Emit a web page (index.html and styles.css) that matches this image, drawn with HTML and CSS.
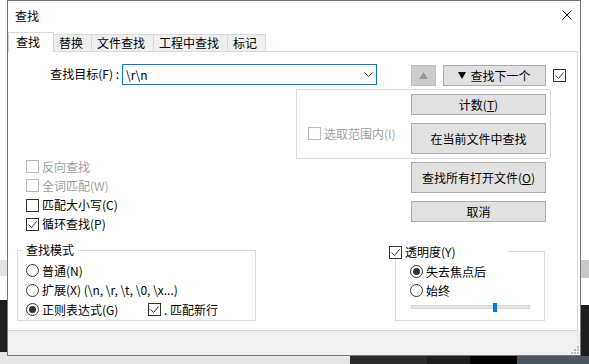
FILE: index.html
```html
<!DOCTYPE html>
<html lang="zh-CN">
<head>
    <meta charset="UTF-8">
    <meta name="viewport" content="width=device-width, initial-scale=1.0">
    <title>查找</title>
    <link rel="stylesheet" href="styles.css">
</head>
<body>
    <div class="dialog">
        <div class="titlebar">
            <span class="title">查找</span>
            <svg class="close" width="10" height="10" viewBox="0 0 10 10"><path d="M0.5 0.5L9.5 9.5M9.5 0.5L0.5 9.5" stroke="#000" stroke-width="1"/></svg>
        </div>

        <div class="tabs">
            <div class="tab active">查找</div>
            <div class="tab">替换</div>
            <div class="tab">文件查找</div>
            <div class="tab">工程中查找</div>
            <div class="tab">标记</div>
        </div>

        <div class="panel">
            <div class="find-row">
                <label class="find-label" for="find-what">查找目标(F) :</label>
                <div class="combo" id="find-what">
                    <span>\r\n</span>
                    <svg width="9" height="5" viewBox="0 0 9 5"><path d="M0.5 0.5L4.5 4.5L8.5 0.5" fill="none" stroke="#444"/></svg>
                </div>
                <button class="btn btn-up" disabled>
                    <svg width="9" height="7" viewBox="0 0 9 7"><path d="M4.5 0L9 7H0Z" fill="#9a9a9a"/></svg>
                </button>
                <button class="btn btn-next">
                    <svg width="8" height="7" viewBox="0 0 8 7"><path d="M0 0H8L4 7Z" fill="#000"/></svg>
                    查找下一个
                </button>
                <span class="check">
                    <svg width="11" height="11" viewBox="0 0 11 11"><path d="M1.5 5.5L4.5 8.5L9.5 2.5" fill="none" stroke="#333"/></svg>
                </span>
            </div>

            <div class="scope-group">
                <div class="opt disabled scope-opt"><span class="check"></span>选取范围内(I)</div>
                <div class="btn-col">
                    <button class="btn">计数(<u>T</u>)</button>
                    <button class="btn btn-tall">在当前文件中查找</button>
                </div>
            </div>

            <div class="mid-row">
                <div class="options">
                    <div class="opt disabled"><span class="check"></span>反向查找</div>
                    <div class="opt disabled"><span class="check"></span>全词匹配(W)</div>
                    <div class="opt"><span class="check"></span>匹配大小写(C)</div>
                    <div class="opt">
                        <span class="check">
                            <svg width="11" height="11" viewBox="0 0 11 11"><path d="M1.5 5.5L4.5 8.5L9.5 2.5" fill="none" stroke="#333"/></svg>
                        </span>循环查找(P)
                    </div>
                </div>
                <div class="btn-col">
                    <button class="btn btn-tall">查找所有打开文件(<u>O</u>)</button>
                    <button class="btn">取消</button>
                </div>
            </div>

            <div class="bottom-row">
                <div class="group mode-group">
                    <div class="group-title">查找模式</div>
                    <div class="opt"><span class="radio"></span>普通(N)</div>
                    <div class="opt"><span class="radio"></span>扩展(X) (\n, \r, \t, \0, \x...)</div>
                    <div class="opt">
                        <span class="radio on"></span>
                        <span class="regex-label">正则表达式(G)</span>
                        <span class="check">
                            <svg width="11" height="11" viewBox="0 0 11 11"><path d="M1.5 5.5L4.5 8.5L9.5 2.5" fill="none" stroke="#333"/></svg>
                        </span>. 匹配新行
                    </div>
                </div>

                <div class="group trans-group">
                    <div class="group-title">
                        <span class="check">
                            <svg width="11" height="11" viewBox="0 0 11 11"><path d="M1.5 5.5L4.5 8.5L9.5 2.5" fill="none" stroke="#333"/></svg>
                        </span>透明度(Y)
                    </div>
                    <div class="opt"><span class="radio on"></span>失去焦点后</div>
                    <div class="opt"><span class="radio"></span>始终</div>
                    <div class="slider"><span class="thumb"></span></div>
                </div>
            </div>
        </div>

        <div class="statusbar">
            <svg width="8" height="8" viewBox="0 0 8 8" fill="#bdbdbd">
                <rect x="6" y="0" width="2" height="2"/>
                <rect x="3" y="3" width="2" height="2"/>
                <rect x="6" y="3" width="2" height="2"/>
                <rect x="0" y="6" width="2" height="2"/>
                <rect x="3" y="6" width="2" height="2"/>
                <rect x="6" y="6" width="2" height="2"/>
            </svg>
        </div>
    </div>
</body>
</html>
```

FILE: styles.css
```css
* {
    box-sizing: border-box;
}

body {
    margin: 0;
    width: 589px;
    height: 364px;
    overflow: hidden;
    font-family: "Noto Sans CJK SC", sans-serif;
    font-size: 12px;
    color: #000;
    /* bits of the editor window behind the dialog */
    background:
        linear-gradient(#1e1e1e, #1e1e1e) 0 300px / 7px 52px no-repeat,
        linear-gradient(#e4e4e4, #e4e4e4) 0 260px / 7px 16px no-repeat,
        linear-gradient(#1e1e1e, #1e1e1e) 581px 305px / 8px 51px no-repeat,
        linear-gradient(#c9c9c9, #c9c9c9) 581px 260px / 8px 18px no-repeat,
        linear-gradient(to right, #e6e6e6 350px, #2b2b2b 350px, #2b2b2b 427px, #1e1e1e 427px, #1e1e1e 470px, #000 470px, #000 517px, #4b5661 517px) 0 356px / 589px 8px no-repeat,
        linear-gradient(#e6e6e6, #e6e6e6) 0 352px / 7px 12px no-repeat,
        #fff;
}

.dialog {
    margin-left: 7px;
    width: 574px;
    height: 356px;
    border: 1px solid #777;
    background: #fff;
    display: flex;
    flex-direction: column;
}

.titlebar {
    height: 31px;
    flex: none;
    display: flex;
    justify-content: space-between;
    align-items: flex-start;
    padding: 0 8px 0 7px;
}

.title {
    line-height: 30px;
}

.close {
    margin-top: 9px;
}

/* tabs */
.tabs {
    position: relative;
    z-index: 1;
    display: flex;
    align-items: flex-end;
    height: 20px;
    flex: none;
    margin-bottom: -1px;
}

.tab {
    height: 18px;
    line-height: 16px;
    padding: 0 8px 0 5px;
    border: 1px solid #d9d9d9;
    border-left: none;
    background: #f0f0f0;
    white-space: nowrap;
}

.tab.active {
    width: 46px;
    height: 20px;
    line-height: 18px;
    padding-left: 7px;
    border-left: 1px solid #d9d9d9;
    border-bottom: none;
    background: #fff;
}

.panel {
    height: 280px;
    flex: none;
    margin-right: 2px;
    border: 1px solid #d9d9d9;
    border-left: none;
    background: #fff;
}

.statusbar {
    flex: 1;
    background: #f0f0f0;
    display: flex;
    justify-content: flex-end;
    align-items: flex-end;
    padding: 0 1px 1px 0;
}

/* controls */
.btn {
    font: inherit;
    color: #000;
    height: 21px;
    padding: 0;
    background: #e1e1e1;
    border: 1px solid #adadad;
    display: flex;
    align-items: center;
    justify-content: center;
    white-space: nowrap;
}

.btn-tall {
    height: 31px;
}

.check {
    width: 13px;
    height: 13px;
    flex: none;
    border: 1px solid #333;
    background: #fff;
    display: flex;
}

.radio {
    width: 13px;
    height: 13px;
    flex: none;
    border: 1px solid #333;
    border-radius: 50%;
    background: #fff;
    display: flex;
    align-items: center;
    justify-content: center;
}

.radio.on::after {
    content: "";
    width: 7px;
    height: 7px;
    border-radius: 50%;
    background: #333;
}

.opt {
    display: flex;
    align-items: center;
    gap: 3px;
    height: 19.25px;
    line-height: 14px;
    white-space: nowrap;
}

.opt.disabled {
    color: #a0a0a0;
}

.opt.disabled .check {
    border-color: #bcbcbc;
}

/* first row */
.find-row {
    display: flex;
    align-items: flex-start;
    margin-top: 12px;
}

.find-label {
    width: 114px;
    padding-right: 3px;
    text-align: right;
    line-height: 20px;
}

.combo {
    width: 255px;
    height: 21px;
    border: 1px solid #0078d7;
    display: flex;
    align-items: center;
    justify-content: space-between;
    padding: 0 3px;
}

.btn-up {
    width: 25px;
    margin: 1px 0 0 34px;
    background: #cccccc;
    border-color: #bfbfbf;
}

.btn-next {
    width: 103px;
    margin: 1px 0 0 7px;
    gap: 4px;
}

.find-row .check {
    margin: 5px 0 0 7px;
}

/* selection scope box */
.scope-group {
    display: flex;
    width: 255px;
    height: 70px;
    margin: 3px 0 0 288px;
    padding: 4px 4px 0 11px;
    border: 1px solid #dcdcdc;
}

.scope-opt {
    flex: 1;
    height: 13px;
    margin-top: 33px;
    color: #7a7a7a;
}

.btn-col {
    width: 135px;
    display: flex;
    flex-direction: column;
    gap: 8px;
}

.mid-row {
    display: flex;
}

.options {
    width: 403px;
    margin-top: -2px;
    padding-left: 18px;
}

.mid-row .btn-col {
    margin-top: 3px;
}

/* bottom group boxes */
.bottom-row {
    display: flex;
    align-items: flex-start;
    margin-top: 16px;
}

.group {
    border: 1px solid #dcdcdc;
}

.group-title {
    width: fit-content;
    height: 14px;
    line-height: 14px;
    background: #fff;
}

.mode-group {
    width: 239px;
    height: 71px;
    margin-left: 9px;
    padding-left: 8px;
}

.mode-group .group-title {
    margin: -8px 0 4px -4px;
    padding: 0 4px;
}

.mode-group .opt {
    height: 19.5px;
}

.regex-label {
    width: 103px;
}

.trans-group {
    width: 150px;
    height: 70px;
    margin: 1px 0 0 139px;
    padding-left: 14px;
}

.trans-group .group-title {
    width: 119px;
    margin: -7px 0 3px -21px;
    display: flex;
    align-items: center;
    gap: 3px;
}

.trans-group .opt {
    height: 19px;
}

.slider {
    width: 119px;
    height: 4px;
    margin: 5px 0 0 1px;
    background: #e7e7e7;
    border: 1px solid #d6d6d6;
    display: flex;
    align-items: center;
}

.thumb {
    width: 4px;
    height: 9px;
    flex: none;
    margin-left: 81px;
    background: #0078d7;
}
```
